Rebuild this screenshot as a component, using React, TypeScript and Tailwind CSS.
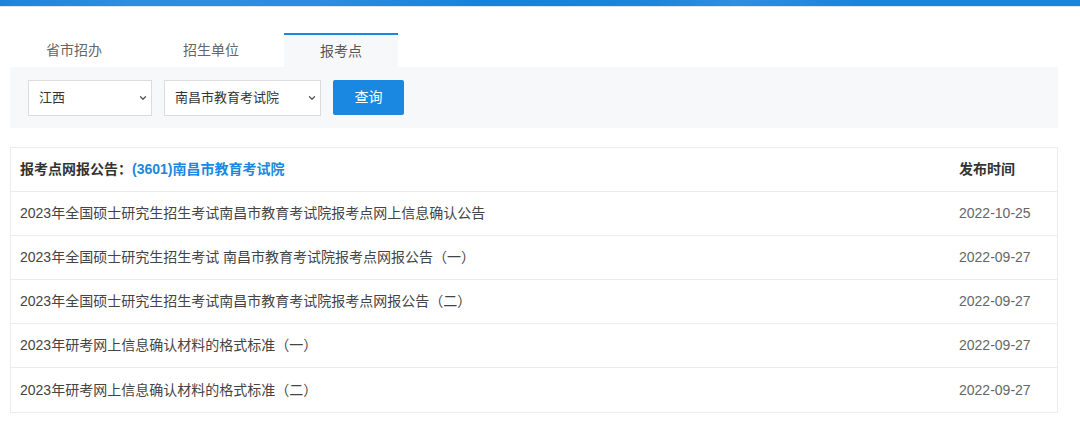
import { ChevronDown } from 'lucide-react';

const rows = [
  { title: '2023年全国硕士研究生招生考试南昌市教育考试院报考点网上信息确认公告', date: '2022-10-25' },
  { title: '2023年全国硕士研究生招生考试 南昌市教育考试院报考点网报公告（一）', date: '2022-09-27' },
  { title: '2023年全国硕士研究生招生考试南昌市教育考试院报考点网报公告（二）', date: '2022-09-27' },
  { title: '2023年研考网上信息确认材料的格式标准（一）', date: '2022-09-27' },
  { title: '2023年研考网上信息确认材料的格式标准（二）', date: '2022-09-27' },
];

const tabs = ['省市招办', '招生单位', '报考点'];

function Select({ value, width }: { value: string; width: string }) {
  return (
    <div className={['relative h-9', width].join(' ')}>
      <select
        defaultValue={value}
        className="h-full w-full appearance-none border border-[#dcdcdc] bg-white pl-[10px] text-[13px] text-[#333] outline-none"
      >
        <option>{value}</option>
      </select>
      <ChevronDown
        size={10}
        strokeWidth={3}
        className="pointer-events-none absolute right-[4px] top-1/2 -translate-y-1/2 text-[#555]"
      />
    </div>
  );
}

export default function App() {
  return (
    <div
      className="h-[428px] w-[1080px] bg-white"
      style={{ fontFamily: '"Liberation Sans", "Noto Sans CJK SC", sans-serif' }}
    >
      {/* top bar */}
      <div className="h-[6px] bg-[linear-gradient(100deg,#1a84dc_0%,#2b8fe2_12%,#2a8de1_30%,#1383dd_45%,#1a86dc_60%,#2d90e2_68%,#1784dd_80%,#1785dd_100%)]" />
      <div className="h-px bg-[#d6e8f7]" />

      <div className="px-[10px] pt-[26px]">
        {/* tabs */}
        <div className="flex h-[34px] gap-[9px]">
          {tabs.map((t, i) => {
            const active = i === tabs.length - 1;
            return (
              <div
                key={t}
                className={[
                  'flex items-center justify-center px-[36px] text-[14px]',
                  active
                    ? 'border-t-2 border-[#1a88e0] bg-[#f7f8fa] text-[#555]'
                    : 'text-[#666]',
                ].join(' ')}
              >
                {t}
              </div>
            );
          })}
        </div>

        {/* filter panel */}
        <div className="flex h-[61px] w-[1048px] items-center gap-3 bg-[#f7f8fa] pl-[18px]">
          <Select value="江西" width="w-[124px]" />
          <Select value="南昌市教育考试院" width="w-[157px]" />
          <button className="h-[35px] w-[71px] rounded-[2px] bg-[#1a88e0] text-[14px] text-white">
            查询
          </button>
        </div>

        {/* list */}
        <div className="mt-[19px] w-[1048px] border border-[#ececec]">
          <div className="flex h-[44px] items-center border-b border-[#ececec] pl-[9px] text-[14px] font-bold text-[#333]">
            <div className="flex-1">
              报考点网报公告：<span className="text-[#1a88e0]">(3601)南昌市教育考试院</span>
            </div>
            <div className="w-[98px]">发布时间</div>
          </div>
          {rows.map((r, i) => (
            <div
              key={i}
              className={[
                'flex h-[44px] items-center pl-[9px] text-[14px]',
                i < rows.length - 1 ? 'border-b border-[#ececec]' : '',
              ].join(' ')}
            >
              <div className="flex-1 text-[#444]">{r.title}</div>
              <div className="w-[98px] text-[#666]">{r.date}</div>
            </div>
          ))}
        </div>
      </div>
    </div>
  );
}
